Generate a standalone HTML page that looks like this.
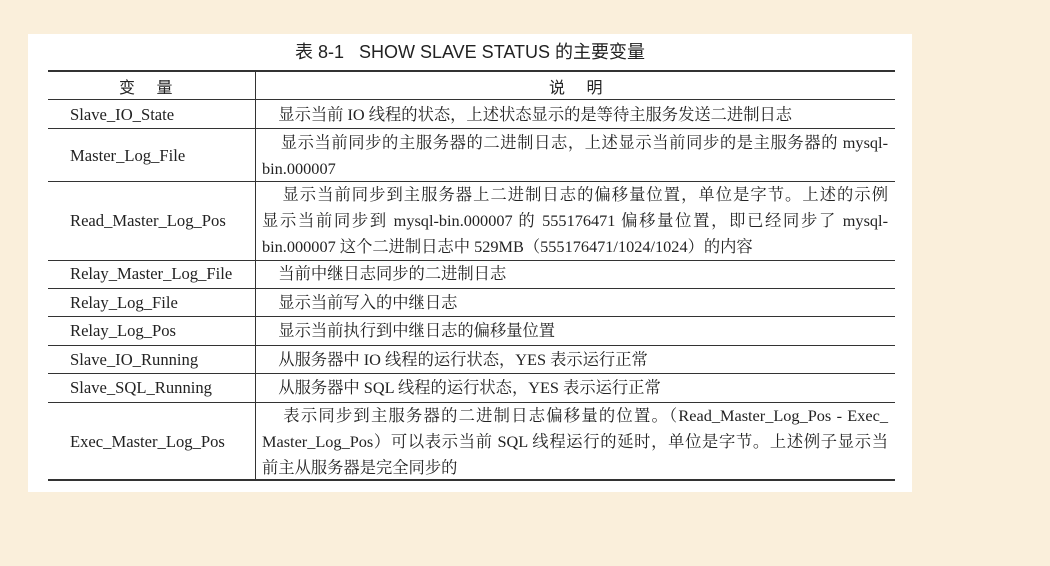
<!DOCTYPE html>
<html><head><meta charset="utf-8"><style>
body{margin:0;width:1050px;height:566px;background:#faefdb;position:relative;overflow:hidden;font-family:"Liberation Serif","Noto Serif CJK SC",serif;color:#222;}
.panel{position:absolute;left:28px;top:34px;width:884px;height:458px;background:#fff;}
.h{position:absolute;left:48px;width:847px;background:#333;}
.v{position:absolute;left:255px;width:1px;background:#333;top:71px;height:409px;}
.t{position:absolute;font-size:16.6px;line-height:20px;white-space:nowrap;}
.c1{left:70px;}
.l{position:absolute;left:262px;width:626px;font-size:16.3px;line-height:20px;white-space:nowrap;}
.j{text-align:justify;text-align-last:justify;white-space:normal;}
.title{position:absolute;left:0;width:940px;text-align:center;top:38px;font-family:"Liberation Sans","Noto Sans CJK SC",sans-serif;font-size:18px;color:#222;}
</style></head><body>
<div class="panel"></div>
<div class="title">表 8-1&nbsp;&nbsp;&nbsp;SHOW SLAVE STATUS 的主要变量</div>
<div class="h" style="top:70px;height:2px"></div>
<div class="h" style="top:99px;height:1px"></div>
<div class="h" style="top:128px;height:1px"></div>
<div class="h" style="top:181px;height:1px"></div>
<div class="h" style="top:260px;height:1px"></div>
<div class="h" style="top:288px;height:1px"></div>
<div class="h" style="top:316px;height:1px"></div>
<div class="h" style="top:345px;height:1px"></div>
<div class="h" style="top:373px;height:1px"></div>
<div class="h" style="top:402px;height:1px"></div>
<div class="h" style="top:479px;height:2px"></div>
<div class="v"></div>
<div class="t" style="left:119px;top:76px;font-family:'Noto Sans CJK SC',sans-serif;font-size:16px">变&nbsp;&nbsp;&nbsp;&nbsp;&nbsp;&nbsp;量</div>
<div class="t" style="left:549px;top:76px;font-family:'Noto Sans CJK SC',sans-serif;font-size:16px">说&nbsp;&nbsp;&nbsp;&nbsp;&nbsp;&nbsp;明</div>

<div class="t c1" style="top:105px">Slave_IO_State</div>
<div class="l" style="top:105px">&nbsp;&nbsp;&nbsp;&nbsp;显示当前 IO 线程的状态，上述状态显示的是等待主服务发送二进制日志</div>

<div class="t c1" style="top:146px">Master_Log_File</div>
<div class="l j" style="top:133px">&nbsp;&nbsp;&nbsp;&nbsp;显示当前同步的主服务器的二进制日志，上述显示当前同步的是主服务器的 mysql-</div>
<div class="l" style="top:159px">bin.000007</div>

<div class="t c1" style="top:211px">Read_Master_Log_Pos</div>
<div class="l j" style="top:185px">&nbsp;&nbsp;&nbsp;&nbsp;显示当前同步到主服务器上二进制日志的偏移量位置，单位是字节。上述的示例</div>
<div class="l j" style="top:211px">显示当前同步到 mysql-bin.000007 的 555176471 偏移量位置，即已经同步了 mysql-</div>
<div class="l" style="top:237px">bin.000007 这个二进制日志中 529MB（555176471/1024/1024）的内容</div>

<div class="t c1" style="top:264px">Relay_Master_Log_File</div>
<div class="l" style="top:264px">&nbsp;&nbsp;&nbsp;&nbsp;当前中继日志同步的二进制日志</div>
<div class="t c1" style="top:293px">Relay_Log_File</div>
<div class="l" style="top:293px">&nbsp;&nbsp;&nbsp;&nbsp;显示当前写入的中继日志</div>
<div class="t c1" style="top:321px">Relay_Log_Pos</div>
<div class="l" style="top:321px">&nbsp;&nbsp;&nbsp;&nbsp;显示当前执行到中继日志的偏移量位置</div>
<div class="t c1" style="top:350px">Slave_IO_Running</div>
<div class="l" style="top:350px">&nbsp;&nbsp;&nbsp;&nbsp;从服务器中 IO 线程的运行状态，YES 表示运行正常</div>
<div class="t c1" style="top:378px">Slave_SQL_Running</div>
<div class="l" style="top:378px">&nbsp;&nbsp;&nbsp;&nbsp;从服务器中 SQL 线程的运行状态，YES 表示运行正常</div>

<div class="t c1" style="top:432px">Exec_Master_Log_Pos</div>
<div class="l j" style="top:406px">&nbsp;&nbsp;&nbsp;&nbsp;表示同步到主服务器的二进制日志偏移量的位置。（Read_Master_Log_Pos - Exec_</div>
<div class="l j" style="top:432px">Master_Log_Pos）可以表示当前 SQL 线程运行的延时，单位是字节。上述例子显示当</div>
<div class="l" style="top:458px">前主从服务器是完全同步的</div>
</body></html>
